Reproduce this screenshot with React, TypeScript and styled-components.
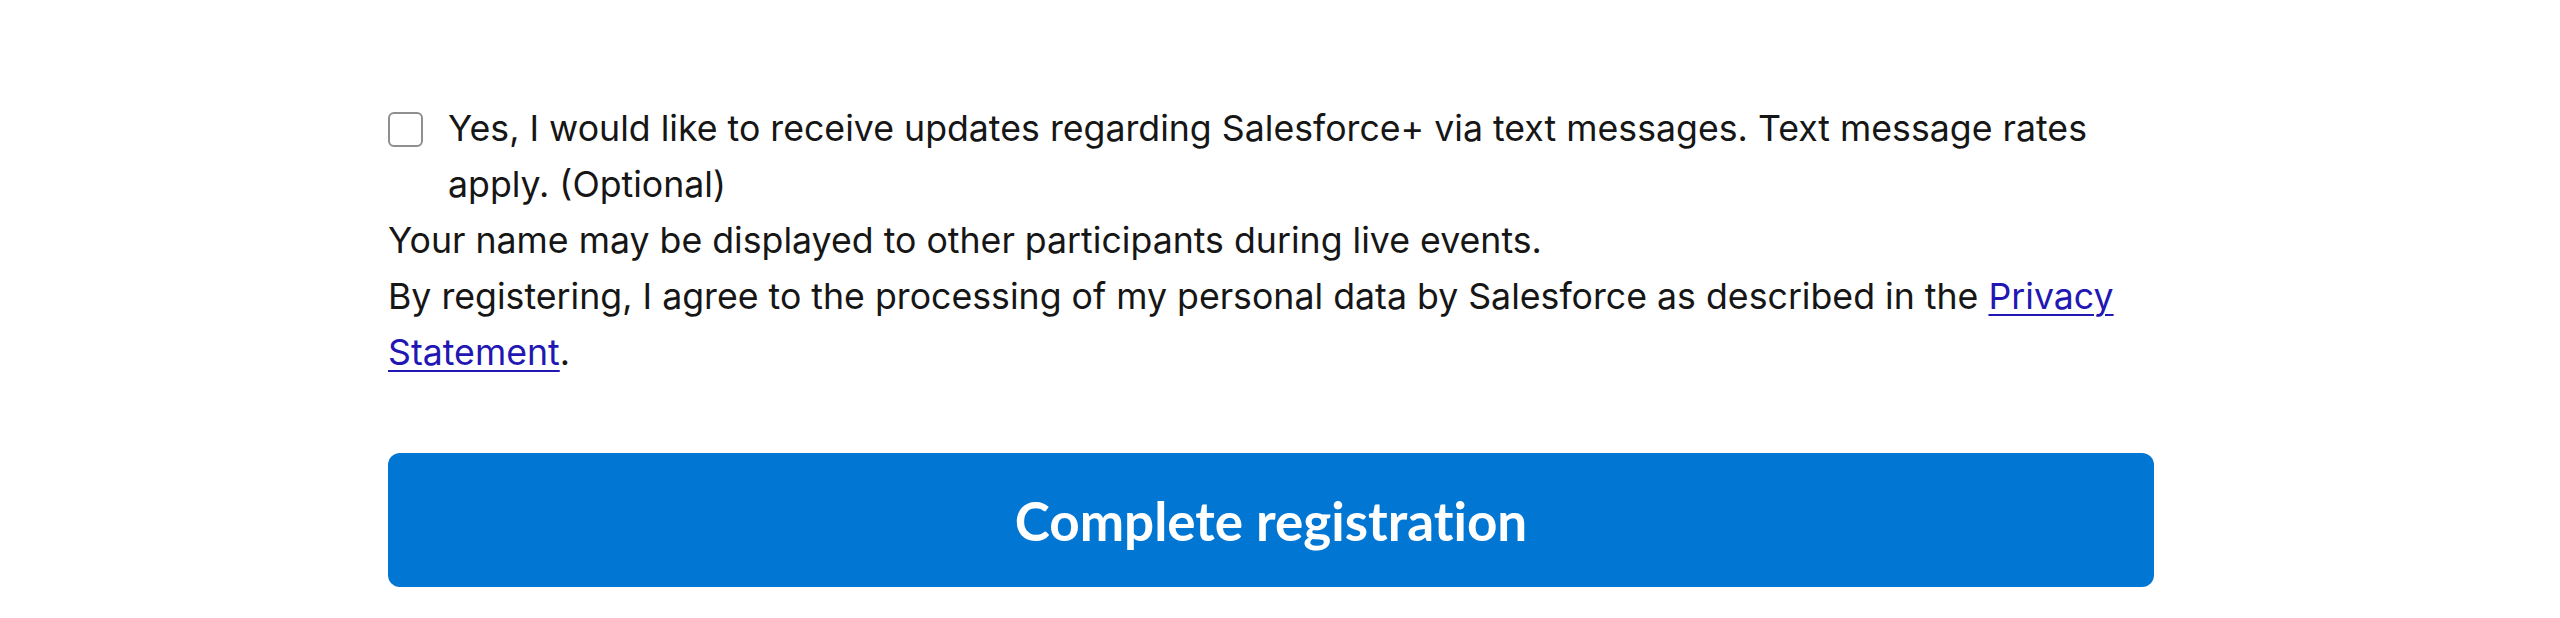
import React from 'react';
import styled, { createGlobalStyle } from 'styled-components';

const GlobalStyle = createGlobalStyle`
  html, body {
    margin: 0;
    padding: 0;
    background: #ffffff;
  }
  body {
    font-family: Inter, Lato, "Liberation Sans", sans-serif;
    color: #161616;
  }
`;

const Form = styled.form`
  width: 1766px;
  padding: 100px 0 0 388px;
  font-size: 35.7px;
  line-height: 56px;
`;

const OptInRow = styled.label`
  display: flex;
  align-items: flex-start;
  gap: 25px;
`;

const Box = styled.span`
  flex-shrink: 0;
  box-sizing: border-box;
  width: 35px;
  height: 35px;
  margin-top: 12px;
  border: 2px solid #8f8f8f;
  border-radius: 6px;
  background: #ffffff;
`;

const Note = styled.p`
  margin: 0;
`;

const PrivacyLink = styled.a`
  color: #2317b3;
  text-decoration: underline;
  text-underline-offset: 5px;
  text-decoration-thickness: 2px;
`;

const SubmitButton = styled.button`
  display: flex;
  align-items: center;
  justify-content: center;
  width: 100%;
  height: 134px;
  margin-top: 73px;
  border: 0;
  border-radius: 12px;
  background: #0176d3;
  color: #ffffff;
  font-family: Lato, "Open Sans", sans-serif;
  font-size: 53px;
  font-weight: 700;
  font-variant-ligatures: none;
  cursor: pointer;
`;

export default function App() {
  return (
    <>
      <GlobalStyle />
      <Form onSubmit={(e) => e.preventDefault()}>
        <OptInRow>
          <Box />
          <Note>
            Yes, I would like to receive updates regarding Salesforce+ via text messages. Text message rates
            <br />
            apply. (Optional)
          </Note>
        </OptInRow>
        <Note>Your name may be displayed to other participants during live events.</Note>
        <Note>
          By registering, I agree to the processing of my personal data by Salesforce as described in the{' '}
          <PrivacyLink href="#">Privacy</PrivacyLink>
          <br />
          <PrivacyLink href="#">Statement</PrivacyLink>.
        </Note>
        <SubmitButton type="submit">Complete registration</SubmitButton>
      </Form>
    </>
  );
}
